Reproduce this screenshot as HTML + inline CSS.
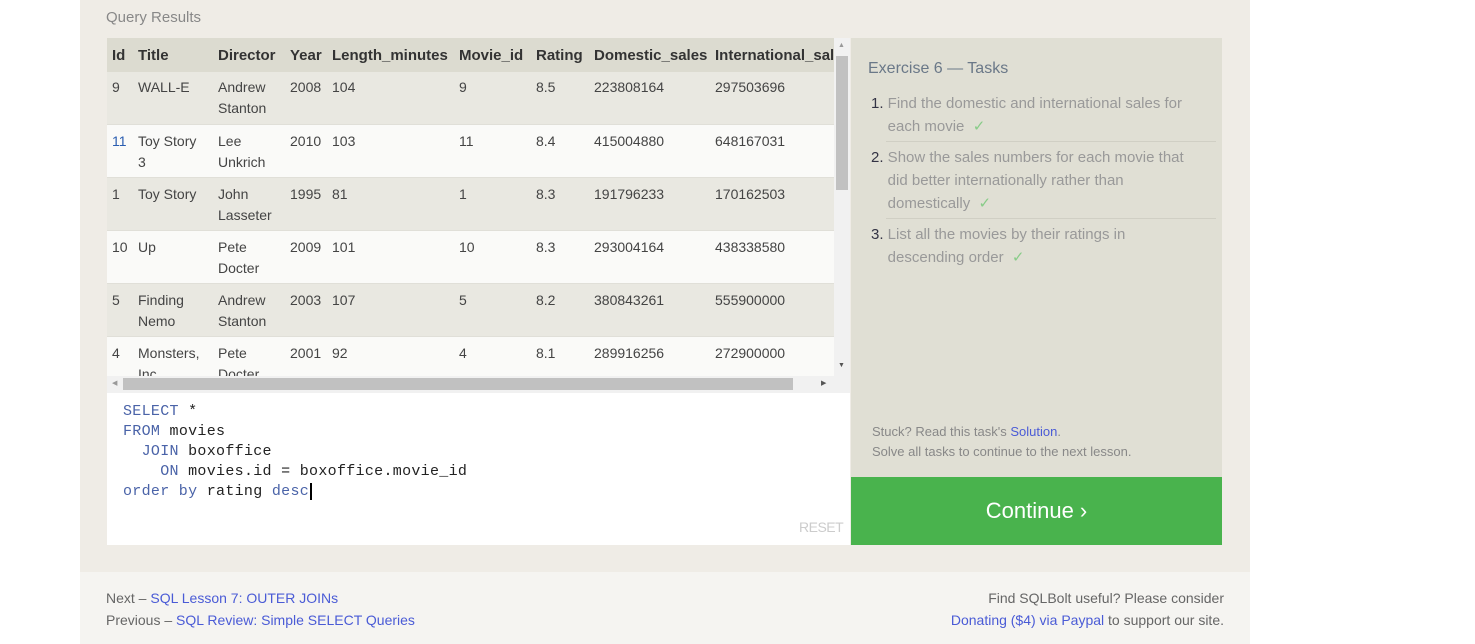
<!DOCTYPE html>
<html><head><meta charset="utf-8"><style>
*{margin:0;padding:0;box-sizing:border-box}
body{width:1475px;height:644px;background:#fff;font-family:"Liberation Sans",sans-serif;position:relative;overflow:hidden;color:#333}
.a{position:absolute;white-space:nowrap}
#main{position:absolute;left:80px;top:0;width:1170px;height:572px;background:#efece6}
#foot{position:absolute;left:80px;top:572px;width:1170px;height:72px;background:#f5f4f1}
.row{position:absolute;left:107px;width:727px;height:53px;border-bottom:1px solid #e0dfd8}
.c{position:absolute;font-size:14px;line-height:21px;color:#444}
.h{position:absolute;font-size:15px;font-weight:bold;color:#333;top:47px}
a{color:#4a5bd6;text-decoration:none}
.code{font-family:"Liberation Mono",monospace;font-size:15px;line-height:20px;color:#222;letter-spacing:0.3px}
.k{color:#4a63a8}
.t{font-size:15px;color:#999;line-height:23px}
.t b{font-weight:normal;color:#334}
</style></head><body>
<div id="main"></div>
<div id="foot"></div>
<div class="a" style="left:106px;top:9px;font-size:15px;color:#888">Query Results</div>
<div class="a" style="left:107px;top:38px;width:727px;height:34px;background:#dcdbd0"></div>
<div class="h" style="left:112px">Id</div><div class="h" style="left:138px">Title</div><div class="h" style="left:218px">Director</div><div class="h" style="left:290px">Year</div><div class="h" style="left:332px">Length_minutes</div><div class="h" style="left:459px">Movie_id</div><div class="h" style="left:536px">Rating</div><div class="h" style="left:594px">Domestic_sales</div><div class="h" style="left:715px;width:119px;overflow:hidden">International_sales</div>
<div class="row" style="top:72px;background:#e9e8e1"></div>
<div class="row" style="top:125px;background:#fafaf8"></div>
<div class="row" style="top:178px;background:#e9e8e1"></div>
<div class="row" style="top:231px;background:#fafaf8"></div>
<div class="row" style="top:284px;background:#e9e8e1"></div>
<div class="row" style="top:337px;height:39px;background:#fafaf8;overflow:hidden;border:none"></div>
<div style="position:absolute;left:107px;top:72px;width:727px;height:304px;overflow:hidden">
<div style="position:absolute;left:-107px;top:-72px;width:900px;height:500px">
<div class="c" style="left:112px;top:77px">9</div><div class="c" style="left:138px;top:77px">WALL-E</div><div class="c" style="left:218px;top:77px">Andrew<br>Stanton</div><div class="c" style="left:290px;top:77px">2008</div><div class="c" style="left:332px;top:77px">104</div><div class="c" style="left:459px;top:77px">9</div><div class="c" style="left:536px;top:77px">8.5</div><div class="c" style="left:594px;top:77px">223808164</div><div class="c" style="left:715px;top:77px">297503696</div>
<div class="c" style="left:112px;top:131px;color:#2a5db0">11</div><div class="c" style="left:138px;top:131px">Toy Story<br>3</div><div class="c" style="left:218px;top:131px">Lee<br>Unkrich</div><div class="c" style="left:290px;top:131px">2010</div><div class="c" style="left:332px;top:131px">103</div><div class="c" style="left:459px;top:131px">11</div><div class="c" style="left:536px;top:131px">8.4</div><div class="c" style="left:594px;top:131px">415004880</div><div class="c" style="left:715px;top:131px">648167031</div>
<div class="c" style="left:112px;top:184px">1</div><div class="c" style="left:138px;top:184px">Toy Story</div><div class="c" style="left:218px;top:184px">John<br>Lasseter</div><div class="c" style="left:290px;top:184px">1995</div><div class="c" style="left:332px;top:184px">81</div><div class="c" style="left:459px;top:184px">1</div><div class="c" style="left:536px;top:184px">8.3</div><div class="c" style="left:594px;top:184px">191796233</div><div class="c" style="left:715px;top:184px">170162503</div>
<div class="c" style="left:112px;top:237px">10</div><div class="c" style="left:138px;top:237px">Up</div><div class="c" style="left:218px;top:237px">Pete<br>Docter</div><div class="c" style="left:290px;top:237px">2009</div><div class="c" style="left:332px;top:237px">101</div><div class="c" style="left:459px;top:237px">10</div><div class="c" style="left:536px;top:237px">8.3</div><div class="c" style="left:594px;top:237px">293004164</div><div class="c" style="left:715px;top:237px">438338580</div>
<div class="c" style="left:112px;top:290px">5</div><div class="c" style="left:138px;top:290px">Finding<br>Nemo</div><div class="c" style="left:218px;top:290px">Andrew<br>Stanton</div><div class="c" style="left:290px;top:290px">2003</div><div class="c" style="left:332px;top:290px">107</div><div class="c" style="left:459px;top:290px">5</div><div class="c" style="left:536px;top:290px">8.2</div><div class="c" style="left:594px;top:290px">380843261</div><div class="c" style="left:715px;top:290px">555900000</div>
<div class="c" style="left:112px;top:343px">4</div><div class="c" style="left:138px;top:343px">Monsters,<br>Inc.</div><div class="c" style="left:218px;top:343px">Pete<br>Docter</div><div class="c" style="left:290px;top:343px">2001</div><div class="c" style="left:332px;top:343px">92</div><div class="c" style="left:459px;top:343px">4</div><div class="c" style="left:536px;top:343px">8.1</div><div class="c" style="left:594px;top:343px">289916256</div><div class="c" style="left:715px;top:343px">272900000</div>
</div></div>
<div class="a" style="left:834px;top:38px;width:16px;height:338px;background:#f1f1f1"></div>
<div class="a" style="left:836px;top:56px;width:12px;height:134px;background:#c1c1c1"></div>
<div class="a" style="left:838px;top:42px;font-size:7px;color:#999">▲</div>
<div class="a" style="left:838px;top:362px;font-size:7px;color:#555">▼</div>
<div class="a" style="left:107px;top:376px;width:743px;height:17px;background:#f1f1f1"></div>
<div class="a" style="left:123px;top:378px;width:670px;height:12px;background:#c1c1c1"></div>
<div class="a" style="left:112px;top:379px;font-size:7px;color:#999">◀</div>
<div class="a" style="left:821px;top:379px;font-size:7px;color:#555">▶</div>
<div class="a" style="left:107px;top:393px;width:743px;height:152px;background:#fff"></div>
<div class="a code" style="left:123px;top:402px"><span class="k">SELECT</span> *<br><span class="k">FROM</span> movies<br>&nbsp;&nbsp;<span class="k">JOIN</span> boxoffice<br>&nbsp;&nbsp;&nbsp;&nbsp;<span class="k">ON</span> movies.id = boxoffice.movie_id<br><span class="k">order by</span> rating <span class="k">desc</span><span style="border-left:2px solid #000;margin-left:1px"></span></div>
<div class="a" style="left:799px;top:519px;font-size:14px;color:#ccc;letter-spacing:-0.5px">RESET</div>
<div class="a" style="left:851px;top:38px;width:371px;height:439px;background:#e0dfd4"></div>
<div class="a" style="left:868px;top:60px;font-size:16px;color:#6a7888">Exercise 6 — Tasks</div>
<div class="a t" style="left:871px;top:92px"><b>1.</b> Find the domestic and international sales for<br>&nbsp;&nbsp;&nbsp;&nbsp;each movie <span style="color:#8c8">&nbsp;✓</span></div>
<div class="a" style="left:886px;top:141px;width:330px;height:1px;background:#d0cfc4"></div>
<div class="a t" style="left:871px;top:146px"><b>2.</b> Show the sales numbers for each movie that<br>&nbsp;&nbsp;&nbsp;&nbsp;did better internationally rather than<br>&nbsp;&nbsp;&nbsp;&nbsp;domestically <span style="color:#8c8">&nbsp;✓</span></div>
<div class="a" style="left:886px;top:218px;width:330px;height:1px;background:#d0cfc4"></div>
<div class="a t" style="left:871px;top:223px"><b>3.</b> List all the movies by their ratings in<br>&nbsp;&nbsp;&nbsp;&nbsp;descending order <span style="color:#8c8">&nbsp;✓</span></div>
<div class="a" style="left:872px;top:422px;font-size:13px;line-height:20px;color:#888">Stuck? Read this task's <a>Solution</a>.<br>Solve all tasks to continue to the next lesson.</div>
<div class="a" style="left:851px;top:477px;width:371px;height:68px;background:#49b34d;color:#fff;font-size:22px;text-align:center;line-height:68px">Continue ›</div>
<div class="a" style="left:106px;top:587px;font-size:14px;line-height:22px;color:#666">Next – <a>SQL Lesson 7: OUTER JOINs</a><br>Previous – <a>SQL Review: Simple SELECT Queries</a></div>
<div class="a" style="right:251px;top:587px;font-size:14px;line-height:22px;color:#666;text-align:right">Find SQLBolt useful? Please consider<br><a>Donating ($4) via Paypal</a> to support our site.</div>
</body></html>
